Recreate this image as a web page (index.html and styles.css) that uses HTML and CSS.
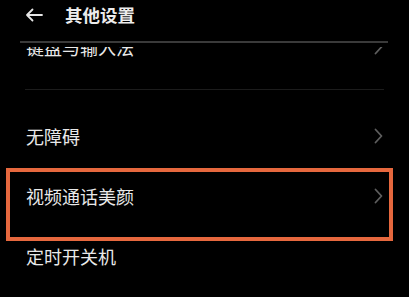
FILE: index.html
```html
<!DOCTYPE html>
<html lang="zh">
<head>
<meta charset="utf-8">
<link rel="stylesheet" href="styles.css">
</head>
<body>
<div class="screen">
  <header class="header">
    <svg class="back" width="18" height="14" viewBox="0 0 18 14">
      <path d="M17 7H2M7.5 1.5L2 7l5.5 5.5" fill="none" stroke="#e6e6e6" stroke-width="1.8" stroke-linecap="round" stroke-linejoin="round"/>
    </svg>
    <h1 class="title">其他设置</h1>
  </header>
  <div class="rule"></div>
  <div class="list">
    <div class="row row-cut">
      <span class="label">键盘与输入法</span>
      <svg class="chev" width="9" height="16" viewBox="0 0 9 16"><path d="M1.5 1.5L7.5 8l-6 6.5" fill="none" stroke="#5e5e5e" stroke-width="1.8" stroke-linecap="round" stroke-linejoin="round"/></svg>
    </div>
    <div class="divider"></div>
    <div class="row">
      <span class="label">无障碍</span>
      <svg class="chev" width="9" height="16" viewBox="0 0 9 16"><path d="M1.5 1.5L7.5 8l-6 6.5" fill="none" stroke="#5e5e5e" stroke-width="1.8" stroke-linecap="round" stroke-linejoin="round"/></svg>
    </div>
    <div class="row">
      <span class="label">视频通话美颜</span>
      <svg class="chev" width="9" height="16" viewBox="0 0 9 16"><path d="M1.5 1.5L7.5 8l-6 6.5" fill="none" stroke="#5e5e5e" stroke-width="1.8" stroke-linecap="round" stroke-linejoin="round"/></svg>
    </div>
    <div class="row">
      <span class="label">定时开关机</span>
    </div>
    <div class="highlight"></div>
  </div>
</div>
</body>
</html>
```
FILE: styles.css
```css
html, body {
  margin: 0;
  padding: 0;
  background: #000;
}
.screen {
  width: 409px;
  height: 297px;
  overflow: hidden;
  background: #000;
  font-family: "Noto Sans CJK SC", "Noto Sans", sans-serif;
  color: #e9e9e9;
  display: flex;
  flex-direction: column;
}
.header {
  height: 29px;
  display: flex;
  align-items: center;
  padding-left: 25px;
  flex: none;
}
.back {
  display: block;
  margin-top: 1px;
}
.title {
  margin: 0 0 0 22px;
  font-size: 17.5px;
  font-weight: 700;
  line-height: 20px;
  color: #ececec;
}
.rule {
  flex: none;
  height: 2px;
  margin: 12px 21px 0 20px;
  background: #3a3a3a;
}
.list {
  flex: 1;
  position: relative;
  overflow: hidden;
  margin-top: 4px;
}
.row {
  height: 60px;
  display: flex;
  align-items: center;
  justify-content: space-between;
  padding: 0 26px 0 26px;
  font-size: 18px;
}
.row-cut {
  margin-top: -30px;
}
.label {
  line-height: 20px;
}
.chev {
  display: block;
}
.divider {
  height: 1px;
  margin: 12px 25px 16px 25px;
  background: #1c1c1c;
}
.highlight {
  position: absolute;
  left: 6px;
  top: 121px;
  width: 379px;
  height: 65px;
  border: 4px solid #e6683e;
}
```
